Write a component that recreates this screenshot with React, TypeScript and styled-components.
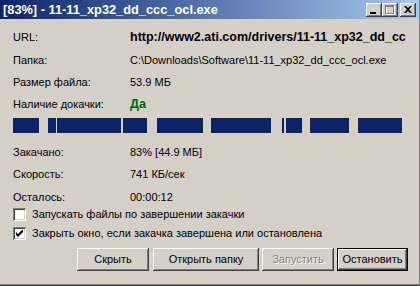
import React from 'react'
import styled, { createGlobalStyle } from 'styled-components'

const GlobalStyle = createGlobalStyle`
  html, body { margin: 0; padding: 0; background: #d4d0c8; }
  body { font-family: "Liberation Sans", Arial, sans-serif; font-size: 11px; color: #000; }
`;

const Window = styled.div`
  width: 420px;
  height: 286px;
  box-sizing: border-box;
  background: #d4d0c8;
  border-right: 1px solid #808080;
  border-bottom: 1px solid #404040;
  box-shadow: inset 0 -1px 0 #808080;
  display: flex;
  flex-direction: column;
  overflow: hidden;
`;

const TitleBar = styled.div`
  height: 19px;
  flex: none;
  background: linear-gradient(to right, #0a246a, #a6caf0);
  display: flex;
  align-items: center;
  justify-content: space-between;
  padding: 0 3px 0 3px;
`;

const Title = styled.div`
  color: #fff;
  font-weight: bold;
  font-size: 12.8px;
  white-space: nowrap;
`;

const Caps = styled.div`
  display: flex;
`;

const CapButton = styled.div<{ gapLeft?: boolean }>`
  width: 16px;
  height: 14px;
  box-sizing: border-box;
  margin-left: ${p => (p.gapLeft ? '2px' : '0')};
  background: #d4d0c8;
  box-shadow: inset -1px -1px #404040, inset 1px 1px #fff, inset -2px -2px #808080;
  display: flex;
  align-items: center;
  justify-content: center;
`;

const Body = styled.div`
  flex: 1;
  padding: 7px 11px 0 13px;
  display: flex;
  flex-direction: column;
`;

const Info = styled.div`
  display: grid;
  grid-template-columns: 117px 1fr;
  grid-auto-rows: 22.4px;
  align-items: center;
`;

const Label = styled.div`
  white-space: nowrap;
`;

const Value = styled.div<{ bold?: boolean; green?: boolean }>`
  white-space: nowrap;
  overflow: hidden;
  font-weight: ${p => (p.bold ? 'bold' : 'normal')};
  font-size: ${p => (p.bold ? '12.5px' : '11px')};
  color: ${p => (p.green ? '#006000' : '#000')};
`;

const Track = styled.div`
  position: relative;
  height: 15px;
  flex: none;
  margin: 2px 4px 8px 0;
`;

const Piece = styled.div`
  position: absolute;
  top: 0;
  bottom: 0;
  background: #0c2366;
`;

const Options = styled.div`
  display: flex;
  flex-direction: column;
  gap: 6px;
  margin-top: 0;
`;

const Option = styled.label`
  display: flex;
  align-items: center;
  gap: 6px;
  height: 13px;
`;

const Box = styled.span`
  width: 13px;
  height: 13px;
  box-sizing: border-box;
  background: #fff;
  box-shadow: inset 1px 1px #808080, inset -1px -1px #fff, inset 2px 2px #404040, inset -2px -2px #d4d0c8;
  display: flex;
  align-items: center;
  justify-content: center;
`;

const Buttons = styled.div`
  display: flex;
  justify-content: flex-end;
  margin-top: 8px;
`;

const Button = styled.div<{ w: number; gap: number; primary?: boolean; disabled?: boolean }>`
  width: ${p => p.w}px;
  height: 23px;
  margin-left: ${p => p.gap}px;
  box-sizing: border-box;
  display: flex;
  align-items: center;
  justify-content: center;
  background: #d4d0c8;
  color: ${p => (p.disabled ? '#808080' : '#000')};
  text-shadow: ${p => (p.disabled ? '1px 1px #fff' : 'none')};
  border: ${p => (p.primary ? '1px solid #000' : 'none')};
  box-shadow: inset -1px -1px #404040, inset 1px 1px #fff, inset -2px -2px #808080;
`;

const segments: [number, number][] = [
  [0, 26], [35, 43], [44, 108], [110, 134], [144, 190],
  [198, 258], [269, 271], [273, 289], [297, 336], [345, 389],
];

export default function App() {
  return (
    <Window>
      <GlobalStyle />
      <TitleBar>
        <Title>[83%] - 11-11_xp32_dd_ccc_ocl.exe</Title>
        <Caps>
          <CapButton>
            <svg width="8" height="9" viewBox="0 0 8 9"><rect x="0" y="7" width="6" height="2" fill="#000" /></svg>
          </CapButton>
          <CapButton>
            <svg width="10" height="10" viewBox="0 0 10 10">
              <rect x="1.5" y="1.5" width="8" height="8" fill="none" stroke="#fff" />
              <rect x="0.5" y="0.5" width="8" height="8" fill="none" stroke="#808080" />
              <rect x="0" y="1" width="9" height="1" fill="#808080" />
            </svg>
          </CapButton>
          <CapButton gapLeft>
            <svg width="8" height="7" viewBox="0 0 8 7">
              <path d="M0 0h2l2 2 2-2h2L5 3.5 8 7H6L4 5 2 7H0l3-3.5z" fill="#000" />
            </svg>
          </CapButton>
        </Caps>
      </TitleBar>
      <Body>
        <Info>
          <Label>URL:</Label>
          <Value bold>http://www2.ati.com/drivers/11-11_xp32_dd_cc</Value>
          <Label>Папка:</Label>
          <Value>C:\Downloads\Software\11-11_xp32_dd_ccc_ocl.exe</Value>
          <Label>Размер файла:</Label>
          <Value>53.9 МБ</Value>
          <Label>Наличие докачки:</Label>
          <Value bold green>Да</Value>
        </Info>
        <Track>
          {segments.map(([a, b]) => (
            <Piece key={a} style={{ left: a, width: b - a }} />
          ))}
        </Track>
        <Info>
          <Label>Закачано:</Label>
          <Value>83% [44.9 МБ]</Value>
          <Label>Скорость:</Label>
          <Value>741 КБ/сек</Value>
          <Label>Осталось:</Label>
          <Value>00:00:12</Value>
        </Info>
        <Options>
          <Option>
            <Box />
            Запускать файлы по завершении закачки
          </Option>
          <Option>
            <Box>
              <svg width="7" height="7" viewBox="0 0 7 7">
                <path d="M0 2v3l2 2 5-5V-1L2 4z" fill="#000" />
              </svg>
            </Box>
            Закрыть окно, если закачка завершена или остановлена
          </Option>
        </Options>
        <Buttons>
          <Button w={72} gap={0}>Скрыть</Button>
          <Button w={106} gap={4}>Открыть папку</Button>
          <Button w={72} gap={3} disabled>Запустить</Button>
          <Button w={71} gap={3} primary>Остановить</Button>
        </Buttons>
      </Body>
    </Window>
  )
}
